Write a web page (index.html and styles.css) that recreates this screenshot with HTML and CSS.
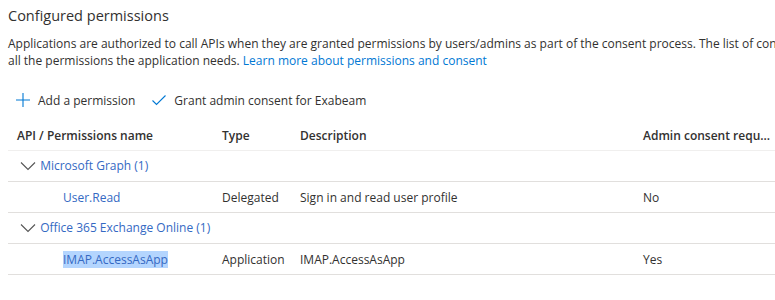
FILE: index.html
```html
<!DOCTYPE html>
<html lang="en">

<head>
    <meta charset="UTF-8">
    <title>Configured permissions</title>
    <link rel="stylesheet" href="styles.css">
</head>

<body>
    <div class="page">
        <h2 class="section-title">Configured permissions</h2>
        <p class="intro">
            Applications are authorized to call APIs when they are granted permissions by users/admins as part of the consent process. The list of configured permissions should include<br>
            all the permissions the application needs. <a href="#">Learn more about permissions and consent</a>
        </p>

        <div class="command-bar">
            <button type="button" class="command">
                <svg width="16" height="16" viewBox="0 0 16 16"><path d="M8 1v14M1 8h14" stroke="#0078d4" stroke-width="1.1" fill="none"/></svg>
                Add a permission
            </button>
            <button type="button" class="command">
                <svg width="16" height="16" viewBox="0 0 16 16"><path d="M1.5 8.5l4 4 9-9" stroke="#0078d4" stroke-width="1.1" fill="none"/></svg>
                Grant admin consent for Exabeam
            </button>
        </div>

        <table class="perm-table">
            <thead>
                <tr>
                    <th class="col-name">API / Permissions name</th>
                    <th class="col-type">Type</th>
                    <th class="col-desc">Description</th>
                    <th class="col-admin">Admin consent requ...</th>
                </tr>
            </thead>
            <tbody>
                <tr class="group-row">
                    <td colspan="4">
                        <span class="chevron"><svg width="16" height="10" viewBox="0 0 16 10"><path d="M1 1.5l7 7 7-7" stroke="#555" stroke-width="1.1" fill="none"/></svg></span>
                        <a href="#">Microsoft Graph (1)</a>
                    </td>
                </tr>
                <tr>
                    <td class="perm-name"><a href="#">User.Read</a></td>
                    <td>Delegated</td>
                    <td>Sign in and read user profile</td>
                    <td>No</td>
                </tr>
                <tr class="group-row">
                    <td colspan="4">
                        <span class="chevron"><svg width="16" height="10" viewBox="0 0 16 10"><path d="M1 1.5l7 7 7-7" stroke="#555" stroke-width="1.1" fill="none"/></svg></span>
                        <a href="#">Office 365 Exchange Online (1)</a>
                    </td>
                </tr>
                <tr>
                    <td class="perm-name"><a href="#" class="selected">IMAP.AccessAsApp</a></td>
                    <td>Application</td>
                    <td>IMAP.AccessAsApp</td>
                    <td>Yes</td>
                </tr>
            </tbody>
        </table>
    </div>
</body>

</html>
```

FILE: styles.css
```css
:root {
    --text-color: #323130;
    --link-color: #0078d4;
    --group-color: #3469c3;
    --border-color: #e1dfdd;
    --header-border: #f0efee;
}

html,
body {
    margin: 0;
    overflow: hidden;
}

body {
    font-family: "Open Sans", "Noto Sans", sans-serif;
    font-size: 12px;
    color: var(--text-color);
    background: #ffffff;
}

.page {
    width: 1000px;
    padding: 0 0 0 8px;
}

.section-title {
    font-size: 14.5px;
    font-weight: 400;
    margin: 4px 0 0;
    line-height: 24px;
}

.intro {
    margin: 7px 0 0;
    line-height: 17px;
    white-space: nowrap;
}

.intro a,
.perm-table a {
    color: var(--link-color);
    text-decoration: none;
}

.command-bar {
    display: flex;
    align-items: center;
    gap: 16px;
    margin-top: 18px;
    padding-left: 7px;
    height: 26px;
}

.command {
    display: flex;
    align-items: center;
    gap: 7px;
    background: none;
    border: none;
    padding: 0;
    font: inherit;
    color: var(--text-color);
}

.perm-table {
    border-collapse: collapse;
    width: 1000px;
    margin-top: 7px;
}

.perm-table th {
    font-weight: 600;
    text-align: left;
    height: 30px;
    border-bottom: 1px solid var(--header-border);
    padding: 0;
}

.perm-table td {
    height: 30px;
    border-bottom: 1px solid var(--border-color);
    padding: 0;
}

.col-name {
    width: 205px;
    padding-left: 9px !important;
}

.col-type {
    width: 78px;
}

.col-desc {
    width: 343px;
}

.perm-table td:first-child {
    padding-left: 9px;
}

.group-row td {
    padding-left: 12px !important;
}

.group-row a {
    color: var(--group-color);
}

.chevron {
    display: inline-block;
    vertical-align: middle;
    margin-right: 1px;
}

.perm-name {
    padding-left: 55px !important;
}

.perm-name a {
    color: var(--group-color);
}

.selected {
    background: #b4d5fe;
}
```
